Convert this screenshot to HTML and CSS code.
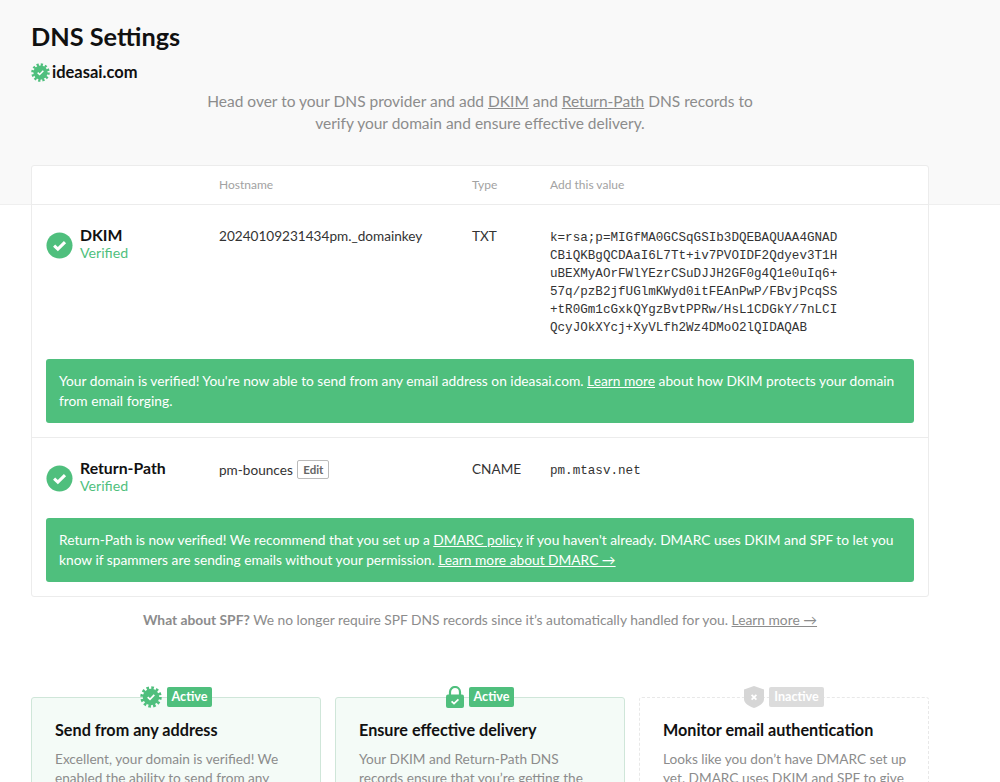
FILE: index.html
```html
<!DOCTYPE html>
<html lang="en">
<head>
    <meta charset="UTF-8">
    <meta name="viewport" content="width=device-width, initial-scale=1.0">
    <title>DNS Settings</title>
    <link rel="stylesheet" href="styles.css">
</head>
<body>
    <svg class="defs" width="0" height="0">
        <symbol id="seal" viewBox="0 0 24 24">
            <circle cx="12" cy="12" r="9" fill="currentColor"/>
            <circle cx="12" cy="12" r="10" fill="none" stroke="currentColor" stroke-width="3.4" stroke-dasharray="2.8 2.436"/>
            <path d="M8.4 12.2l2.5 2.4 4.7-4.8" fill="none" stroke="#fff" stroke-width="1.9"/>
        </symbol>
        <symbol id="round-check" viewBox="0 0 28 28">
            <circle cx="14" cy="14" r="13.5" fill="#4fbf7d"/>
            <path d="M8.4 14.2l3.9 3.6 7.4-7.2" fill="none" stroke="#fff" stroke-width="3.2"/>
        </symbol>
    </svg>

    <header class="top">
        <h1 class="title">DNS Settings</h1>
        <div class="domain">
            <svg class="domain-icon"><use href="#seal"/></svg>
            <span>ideasai.com</span>
        </div>
        <p class="intro">Head over to your DNS provider and add <a href="#">DKIM</a> and <a href="#">Return-Path</a> DNS records to<br>verify your domain and ensure effective delivery.</p>
    </header>

    <main class="content">
        <section class="records">
            <div class="row head">
                <div></div>
                <div>Hostname</div>
                <div>Type</div>
                <div>Add this value</div>
            </div>

            <div class="record">
                <div class="row">
                    <div class="name">
                        <svg class="check"><use href="#round-check"/></svg>
                        <div>
                            <h2>DKIM</h2>
                            <p class="verified">Verified</p>
                        </div>
                    </div>
                    <div>20240109231434pm._domainkey</div>
                    <div>TXT</div>
                    <div class="value">k=rsa;p=MIGfMA0GCSqGSIb3DQEBAQUAA4GNAD<br>CBiQKBgQCDAaI6L7Tt+iv7PVOIDF2Qdyev3T1H<br>uBEXMyAOrFWlYEzrCSuDJJH2GF0g4Q1e0uIq6+<br>57q/pzB2jfUGlmKWyd0itFEAnPwP/FBvjPcqSS<br>+tR0Gm1cGxkQYgzBvtPPRw/HsL1CDGkY/7nLCI<br>QcyJOkXYcj+XyVLfh2Wz4DMoO2lQIDAQAB</div>
                </div>
                <p class="notice">Your domain is verified! You're now able to send from any email address on ideasai.com. <a href="#">Learn more</a> about how DKIM protects your domain<br>from email forging.</p>
            </div>

            <div class="record record-last">
                <div class="row">
                    <div class="name">
                        <svg class="check"><use href="#round-check"/></svg>
                        <div>
                            <h2>Return-Path</h2>
                            <p class="verified">Verified</p>
                        </div>
                    </div>
                    <div>pm-bounces <button class="edit">Edit</button></div>
                    <div>CNAME</div>
                    <div class="value">pm.mtasv.net</div>
                </div>
                <p class="notice">Return-Path is now verified! We recommend that you set up a <a href="#">DMARC policy</a> if you haven't already. DMARC uses DKIM and SPF to let you<br>know if spammers are sending emails without your permission. <a href="#">Learn more about DMARC →</a></p>
            </div>
        </section>

        <p class="spf"><b>What about SPF?</b> We no longer require SPF DNS records since it’s automatically handled for you. <a href="#">Learn more →</a></p>

        <section class="cards">
            <article class="card">
                <div class="status">
                    <svg class="status-icon"><use href="#seal"/></svg>
                    <span class="pill">Active</span>
                </div>
                <h3>Send from any address</h3>
                <p>Excellent, your domain is verified! We enabled the ability to send from any address on this domain.</p>
            </article>
            <article class="card">
                <div class="status">
                    <svg class="status-icon lock" viewBox="0 0 18 22">
                        <path d="M4 10V6a5 5 0 0 1 10 0v4" fill="none" stroke="currentColor" stroke-width="2.2"/>
                        <rect y="8.5" width="18" height="13.5" rx="2" fill="currentColor"/>
                        <path d="M5.6 15.4l2.4 2.2 4.4-4.2" fill="none" stroke="#fff" stroke-width="1.8"/>
                    </svg>
                    <span class="pill">Active</span>
                </div>
                <h3>Ensure effective delivery</h3>
                <p>Your DKIM and Return-Path DNS records ensure that you’re getting the best possible delivery.</p>
            </article>
            <article class="card card-off">
                <div class="status">
                    <svg class="status-icon shield" viewBox="0 0 20 22">
                        <path d="M10 0l10 3.5v9.5c0 4-4 7-10 9-6-2-10-5-10-9V3.5z" fill="currentColor"/>
                        <path d="M7.6 8.8l4.8 4.8m0-4.8l-4.8 4.8" fill="none" stroke="#fff" stroke-width="1.8"/>
                    </svg>
                    <span class="pill">Inactive</span>
                </div>
                <h3>Monitor email authentication</h3>
                <p>Looks like you don’t have DMARC set up yet. DMARC uses DKIM and SPF to give you more protection.</p>
            </article>
        </section>
    </main>
</body>
</html>
```

FILE: styles.css
```css
*{
    margin: 0;
    padding: 0;
    box-sizing: border-box;
}
html, body{
    height: 782px;
    overflow: hidden;
}
body{
    background-color: white;
    color: #111;
    font-family: "Lato", "Liberation Sans", sans-serif;
    font-size: 15px;
}
a{
    color: inherit;
    text-decoration: underline;
}
.defs{
    position: absolute;
}
.top{
    height: 205px;
    padding: 20px 71px 0 31px;
    background-color: #f9f9f9;
    border-bottom: 1px solid #efefef;
}
.title{
    font-size: 25.3px;
    line-height: 32px;
    font-weight: 700;
}
.domain{
    display: flex;
    align-items: center;
    gap: 2px;
    margin-top: 10px;
    font-size: 16.5px;
    line-height: 20px;
    font-weight: 700;
}
.domain-icon{
    width: 19px;
    height: 19px;
    color: #4fbf7d;
}
.intro{
    margin-top: 8px;
    text-align: center;
    font-size: 15.5px;
    line-height: 22px;
    color: #8c8c8c;
}
.content{
    margin-top: -40px;
    padding: 0 71px 0 31px;
}
.records{
    background-color: white;
    border: 1px solid #ececec;
    border-radius: 3px;
}
.row{
    display: grid;
    grid-template-columns: 173px 253px 78px 1fr;
    padding-left: 14px;
}
.head{
    height: 38px;
    padding-bottom: 2px;
    align-items: center;
    font-size: 12px;
    color: #a2a2a2;
}
.record{
    padding: 22px 14px 14px 0;
    border-top: 1px solid #ececec;
    font-size: 13.6px;
    line-height: 18px;
    color: #333;
}
.record-last .row{
    min-height: 36px;
}
.name{
    display: flex;
    gap: 7px;
    margin-top: -2px;
}
.name h2{
    font-size: 15.8px;
    line-height: 19px;
    font-weight: 700;
    color: #111;
}
.check{
    width: 27px;
    height: 27px;
    margin-top: 7px;
}
.verified{
    font-size: 14.2px;
    line-height: 17px;
    color: #4fbf7d;
}
.value{
    font-family: "Liberation Mono", monospace;
    font-size: 12.6px;
    line-height: 18px;
    padding-top: 2px;
}
.edit{
    margin-left: 1px;
    padding: 0 5px;
    height: 19px;
    font-family: inherit;
    font-size: 11.5px;
    font-weight: 700;
    color: #666;
    background-color: white;
    border: 1px solid #bbb;
    border-radius: 2px;
    vertical-align: 1px;
}
.notice{
    margin: 22px 0 0 14px;
    padding: 12px 13px;
    background-color: #4fbf7d;
    color: white;
    font-size: 13.75px;
    line-height: 20px;
    border-radius: 3px;
}
.spf{
    margin-top: 13px;
    text-align: center;
    font-size: 13.8px;
    line-height: 20px;
    color: #8c8c8c;
}
.cards{
    display: grid;
    grid-template-columns: repeat(3, 1fr);
    gap: 14px;
    margin-top: 67px;
}
.card{
    position: relative;
    height: 200px;
    padding: 22px 20px 0 23px;
    background-color: #f4fbf7;
    border: 1px solid #cfe6d9;
    border-radius: 3px;
}
.card h3{
    font-size: 16.2px;
    line-height: 20px;
    font-weight: 700;
}
.card p{
    margin-top: 10px;
    font-size: 13.65px;
    line-height: 19px;
    color: #8c8c8c;
}
.card-off{
    background-color: white;
    border: 1px dashed #e8e8e8;
}
.status{
    position: absolute;
    top: -12px;
    left: 0;
    right: 0;
    display: flex;
    justify-content: center;
    align-items: center;
    gap: 5px;
    color: #4fbf7d;
}
.status-icon{
    width: 22px;
    height: 22px;
}
.lock{
    width: 18px;
    height: 22px;
}
.shield{
    width: 20px;
    height: 22px;
}
.pill{
    padding: 0 5px;
    height: 20px;
    line-height: 20px;
    font-size: 12.6px;
    font-weight: 700;
    color: white;
    background-color: #4fbf7d;
    border-radius: 2px;
}
.card-off .status{
    color: #d6d6d6;
}
.card-off .pill{
    background-color: #dcdcdc;
}
```
